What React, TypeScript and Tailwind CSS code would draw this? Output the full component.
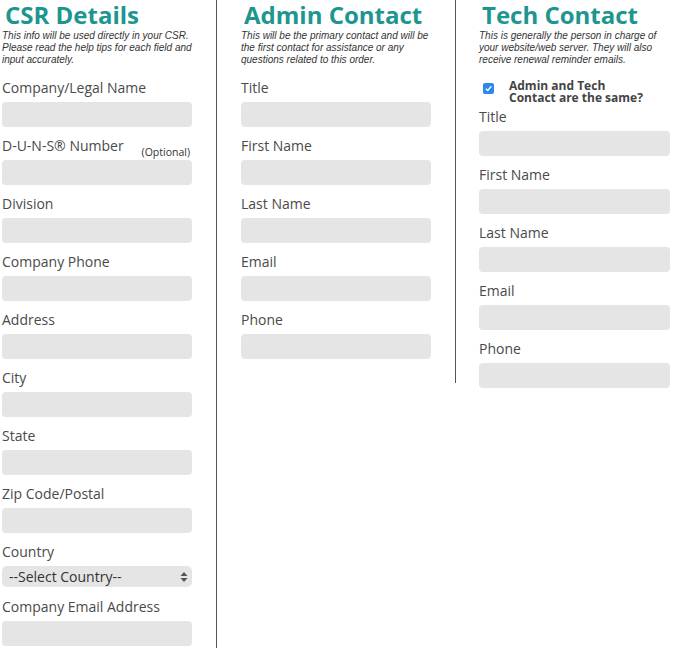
import { ReactNode } from "react";

const Field = ({ label, extra }: { label: string; extra?: ReactNode }) => (
    <div className="flex flex-col">
        <div className="flex items-end justify-between h-[18px] mb-[5px]">
            <span className="text-[14px] leading-[18px] text-[#4a4a4a]">{label}</span>
            {extra}
        </div>
        <div className="h-[25px] w-full rounded-[4px] bg-[#e5e5e5] mb-[10px]" />
    </div>
);

const Header = ({ title, desc }: { title: string; desc: string[] }) => (
    <div className="flex flex-col">
        <h2 className="pl-[3px] text-[24px] leading-[34px] -mt-[2px] -mb-[2px] font-bold text-[#1c968e]">{title}</h2>
        <p className="font-['Liberation_Sans',Arial,sans-serif] italic text-[10px] leading-[12px] text-[#333]">
            {desc.map((line) => (
                <span key={line} className="block">{line}</span>
            ))}
        </p>
    </div>
);

const App = () => {
    return (
        <div className="flex bg-white w-[673px] h-[648px] overflow-hidden font-['Open_Sans',sans-serif]">
            <div className="w-[217px] shrink-0 border-r border-[#555] pl-[2px] pr-[24px] pb-[20px]">
                <Header
                    title="CSR Details"
                    desc={[
                        "This info will be used directly in your CSR.",
                        "Please read the help tips for each field and",
                        "input accurately.",
                    ]}
                />
                <div className="mt-[13px]">
                    <Field label="Company/Legal Name" />
                    <Field
                        label="D-U-N-S® Number"
                        extra={<span className="text-[10.5px] leading-[12px] text-[#333] pr-[2px] -mb-[3px]">(Optional)</span>}
                    />
                    <Field label="Division" />
                    <Field label="Company Phone" />
                    <Field label="Address" />
                    <Field label="City" />
                    <Field label="State" />
                    <Field label="Zip Code/Postal" />
                    <div className="flex flex-col">
                        <span className="text-[14px] leading-[18px] text-[#4a4a4a] mb-[5px]">Country</span>
                        <div className="h-[21px] rounded-[5px] bg-[#e5e5e5] flex items-center justify-between pl-[7px] pr-[4px] mb-[11px]">
                            <span className="text-[14px] text-[#333]">--Select Country--</span>
                            <svg width="8" height="12" viewBox="0 0 8 12">
                                <path d="M4 1 L7.5 5 H0.5 Z" fill="#555" />
                                <path d="M4 11 L7.5 7 H0.5 Z" fill="#555" />
                            </svg>
                        </div>
                    </div>
                    <Field label="Company Email Address" />
                </div>
            </div>
            <div className="w-[239px] shrink-0 h-[383px] border-r border-[#555] pl-[24px] pr-[24px]">
                <Header
                    title="Admin Contact"
                    desc={[
                        "This will be the primary contact and will be",
                        "the first contact for assistance or any",
                        "questions related to this order.",
                    ]}
                />
                <div className="mt-[13px]">
                    <Field label="Title" />
                    <Field label="First Name" />
                    <Field label="Last Name" />
                    <Field label="Email" />
                    <Field label="Phone" />
                </div>
            </div>
            <div className="w-[214px] shrink-0 pl-[23px]">
                <Header
                    title="Tech Contact"
                    desc={[
                        "This is generally the person in charge of",
                        "your website/web server. They will also",
                        "receive renewal reminder emails.",
                    ]}
                />
                <div className="mt-[13px] flex items-start h-[24px] mb-[5px]">
                    <span className="mt-[4px] ml-[4px] w-[11px] h-[11px] rounded-[2px] bg-[#2f86f0] flex items-center justify-center">
                        <svg width="9" height="9" viewBox="0 0 9 9">
                            <path d="M1.8 4.8 L3.7 6.6 L7.3 2.3" fill="none" stroke="white" strokeWidth="1.4" />
                        </svg>
                    </span>
                    <span className="ml-[15px] mt-[1px] text-[12px] leading-[12px] font-bold text-[#444]">
                        Admin and Tech
                        <br />
                        Contact are the same?
                    </span>
                </div>
                <Field label="Title" />
                <Field label="First Name" />
                <Field label="Last Name" />
                <Field label="Email" />
                <Field label="Phone" />
            </div>
        </div>
    );
};

export default App;
